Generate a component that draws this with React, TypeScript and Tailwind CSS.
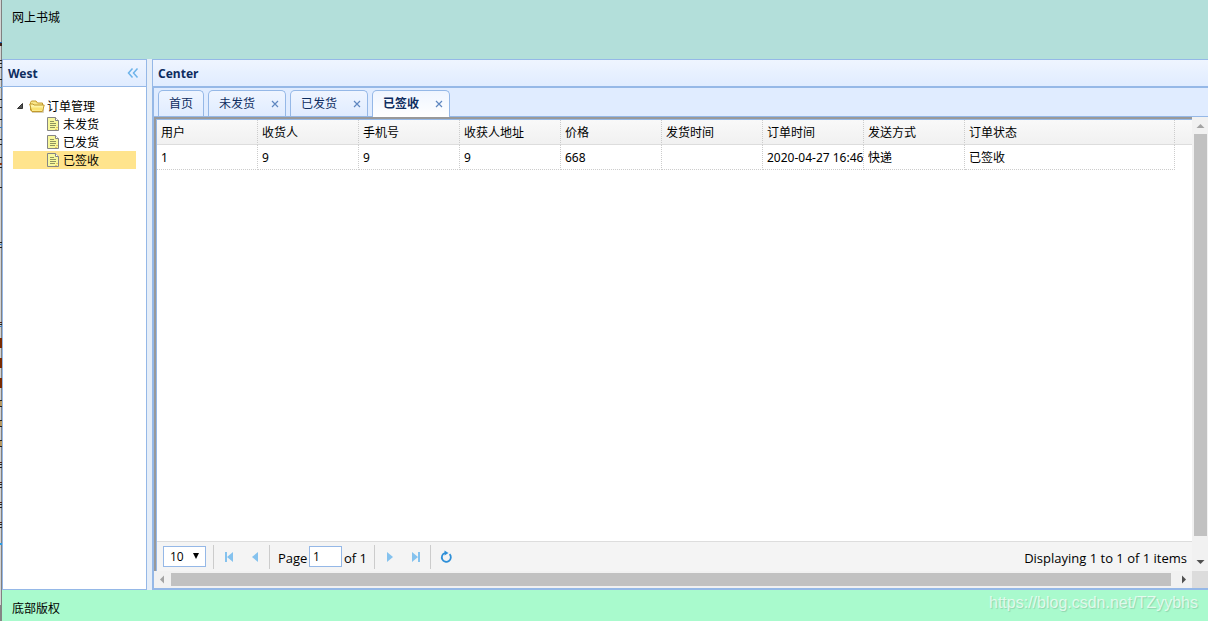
import React, { useState } from 'react';

const columns = ['用户', '收货人', '手机号', '收获人地址', '价格', '发货时间', '订单时间', '发送方式', '订单状态'];
const rows = [['1', '9', '9', '9', '668', '', '2020-04-27 16:46', '快递', '已签收']];
const orderPages = ['未发货', '已发货', '已签收'];

// what shows of the window behind, along the left edge
const edgeMarks = [
  { top: 42, height: 1, color: '#2468b0' },
  { top: 43, height: 3, color: '#3c2018' },
  { top: 60, height: 1, color: '#222' },
  { top: 63, height: 1, color: '#222' },
  { top: 67, height: 1, color: '#222' },
  { top: 79, height: 1, color: '#222' },
  { top: 87, height: 1, color: '#5b9bd5' },
  { top: 99, height: 1, color: '#222' },
  { top: 107, height: 1, color: '#222' },
  { top: 119, height: 1, color: '#222' },
  { top: 127, height: 1, color: '#3c78b4' },
  { top: 139, height: 1, color: '#222' },
  { top: 144, height: 1, color: '#222' },
  { top: 157, height: 1, color: '#222' },
  { top: 163, height: 2, color: '#8a3a18' },
  { top: 167, height: 1, color: '#222' },
  { top: 187, height: 1, color: '#222' },
  { top: 242, height: 1, color: '#222' },
  { top: 244, height: 1, color: '#3c78b4' },
  { top: 247, height: 1, color: '#222' },
  { top: 322, height: 1, color: '#4a2418' },
  { top: 324, height: 1, color: '#222' },
  { top: 326, height: 1, color: '#3c78b4' },
  { top: 338, height: 10, color: '#7a2a00' },
  { top: 358, height: 10, color: '#7a2a00' },
  { top: 378, height: 10, color: '#7a2a00' },
  { top: 400, height: 1, color: '#222' },
  { top: 401, height: 5, color: '#b89860' },
  { top: 406, height: 1, color: '#222' },
  { top: 420, height: 1, color: '#222' },
  { top: 421, height: 5, color: '#b89860' },
  { top: 426, height: 1, color: '#222' },
  { top: 440, height: 1, color: '#222' },
  { top: 441, height: 5, color: '#b89860' },
  { top: 446, height: 1, color: '#222' },
  { top: 462, height: 1, color: '#4a2418' },
  { top: 464, height: 1, color: '#222' },
  { top: 467, height: 1, color: '#222' },
  { top: 482, height: 1, color: '#4a2418' },
  { top: 484, height: 1, color: '#222' },
  { top: 487, height: 1, color: '#222' },
  { top: 502, height: 1, color: '#4a2418' },
  { top: 504, height: 1, color: '#222' },
  { top: 507, height: 1, color: '#222' },
  { top: 522, height: 1, color: '#4a2418' },
  { top: 524, height: 1, color: '#222' },
  { top: 527, height: 1, color: '#222' },
  { top: 543, height: 2, color: '#2c9be0' },
  { top: 605, height: 16, color: '#858585' },
];

const FolderIcon = () => (
  <svg width="16" height="18" viewBox="0 0 16 18" className="shrink-0">
    <path d="M1.5 13.5v-8l1-1.500h4.500l1.500 2h5v3" fill="#f8e58a" stroke="#c39a2c" />
    <path d="M3 15.500h11.500v-6" fill="none" stroke="#d8d0b8" />
    <path d="M2.8 14.500h10.700l1.700-6.500H5L4 7H.7z" fill="#fdf3a4" stroke="#c39a2c" />
    <path d="M3.300 13.500h9.500l.8-3H2.500z" fill="#fae271" />
  </svg>
);

const FileIcon = () => (
  <svg width="16" height="18" viewBox="0 0 16 18" className="shrink-0">
    <path d="M.5 2.500h8l3 3v10H.5z" fill="#f8f89c" stroke="#858585" />
    <path d="M8.500 2.500v3h3" fill="#fff" stroke="#858585" />
    <path d="M3 6.500h4M3 8.500h6M3 10.500h6M3 12.500h5" stroke="#8f9460" />
    <path d="M9 12.500h2M8 14.500h2" stroke="#e8c860" />
  </svg>
);

const Separator = () => <div className="h-6 w-px bg-[#ccc]" />;

interface PagerButtonProps {
  label: string;
  children: React.ReactNode;
}

const PagerButton: React.FC<PagerButtonProps> = ({ label, children }) => (
  <button title={label} aria-label={label} className="flex h-6 w-[26px] items-center justify-center">
    <svg width="16" height="16" viewBox="0 0 16 16" fill="#85c2ee">
      {children}
    </svg>
  </button>
);

const West = () => (
  <aside className="flex w-[145px] shrink-0 flex-col border border-[#95b8e7] bg-white">
    <div className="flex h-[27px] shrink-0 items-center justify-between border-b border-[#95b8e7] bg-linear-to-b from-[#eff5ff] to-[#e0ecff] pr-[6px] pl-[5px]">
      <h2 className="pt-[2px] font-bold text-[#0e2d5f]">West</h2>
      <button title="Collapse" aria-label="Collapse">
        <svg width="14" height="14" viewBox="0 0 14 14" fill="none" stroke="#6cb3ea" strokeWidth="1.5">
          <path d="M6.5 2.500l-4 4.500l4 4.500M11.500 2.500l-4 4.500l4 4.500" />
        </svg>
      </button>
    </div>
    <ul className="p-[10px]">
      <li>
        <div className="flex h-[18px] items-center">
          <svg width="16" height="18" viewBox="0 0 16 18">
            <path d="M9.500 6.500v5h-5z" fill="#555" stroke="#333" />
          </svg>
          <FolderIcon />
          <span className="pt-[2px] pl-[2px]">订单管理</span>
        </div>
        <ul>
          {orderPages.map(page => (
            <li key={page} className={`flex h-[18px] items-center pl-[34px] ${page === '已签收' ? 'bg-[#ffe48d]' : ''}`}>
              <FileIcon />
              <a href="#" className="pt-[2px]">{page}</a>
            </li>
          ))}
        </ul>
      </li>
    </ul>
  </aside>
);

const Tabs = () => (
  <div className="flex h-[29px] shrink-0 items-end gap-1 border-b border-[#95b8e7] bg-[#e0ecff] pl-1 text-[#0e2d5f]">
    <button className="h-[26px] rounded-t-[5px] border border-b-0 border-[#95b8e7] bg-linear-to-b from-[#eff5ff] to-[#e0ecff] px-[10px]">
      首页
    </button>
    {orderPages.map(page => (
      <div
        key={page}
        className={`flex w-[78px] items-center justify-between rounded-t-[5px] border border-b-0 border-[#95b8e7] bg-linear-to-b from-[#eff5ff] pr-[5px] pl-[10px] ${
          page === '已签收' ? '-mb-px h-[27px] to-white font-bold' : 'h-[26px] to-[#e0ecff]'
        }`}
      >
        <button>{page}</button>
        <button aria-label={`关闭${page}`}>
          <svg width="10" height="10" viewBox="0 0 10 10" stroke="#5f87c0" strokeWidth="1.2">
            <path d="M2 2l6 6M8 2l-6 6" />
          </svg>
        </button>
      </div>
    ))}
  </div>
);

const OrderGrid = () => (
  <div className="flex-1 overflow-hidden bg-white">
    <div className="bg-linear-to-b from-[#f9f9f9] to-[#e8e8e8]">
      <table className="w-full table-fixed border-separate border-spacing-0">
        <colgroup>
          {columns.map((c, i) => <col key={c} className={i === 8 ? 'w-[210px]' : 'w-[101px]'} />)}
          <col />
        </colgroup>
        <thead>
          <tr className="h-[25px]">
            {columns.map(c => (
              <th key={c} className="border-r border-b border-r-[#ccc] border-b-[#ddd] px-1 pt-[2px] pb-0 text-left font-normal [border-right-style:dotted]">{c}</th>
            ))}
            <td className="border-b border-[#ddd] p-0" />
          </tr>
        </thead>
        <tbody className="bg-white">
          {rows.map((row, r) => (
            <tr key={r} className="h-[25px]">
              {row.map((cell, i) => (
                <td key={i} className="overflow-hidden border-r border-b border-dotted border-[#ccc] pt-[2px] pr-0 pb-0 pl-1 whitespace-nowrap">{cell}</td>
              ))}
              <td className="p-0" />
            </tr>
          ))}
        </tbody>
      </table>
    </div>
  </div>
);

const Pager = () => {
  const [pageNo, setPageNo] = useState('1');

  return (
    <div className="flex h-[30px] shrink-0 items-center border-t border-[#ddd] bg-[#f4f4f4] pr-[5px] pl-[6px] font-['Open_Sans',sans-serif] text-[13px]">
      <div className="relative mr-[7px] h-[21px] w-[43px]">
        <select aria-label="每页条数" className="h-full w-full appearance-none border border-[#95b8e7] bg-white pl-[6px] text-[12px]">
          <option>10</option>
          <option>20</option>
          <option>50</option>
        </select>
        <svg width="8" height="6" viewBox="0 0 8 6" className="pointer-events-none absolute top-[7px] right-[6px]">
          <path d="M1 0h6L4 6z" />
        </svg>
      </div>
      <Separator />
      <div className="flex w-[55px] pl-[2px]">
        <PagerButton label="First"><path d="M4 3h2v10H4zM12 3v10L6 8z" /></PagerButton>
        <PagerButton label="Prev"><path d="M11 3v10L5 8z" /></PagerButton>
      </div>
      <Separator />
      <label className="flex h-full w-[104px] items-center pl-2">
        <span className="w-[31px] pt-[2px]">Page</span>
        <input
          value={pageNo}
          onChange={e => setPageNo(e.target.value)}
          className="h-[21px] w-[33px] border border-[#95b8e7] bg-white px-[3px] text-[12px]"
        />
        <span className="pt-[2px] pl-[2px]">of 1</span>
      </label>
      <Separator />
      <div className="flex w-[55px] pl-[2px]">
        <PagerButton label="Next"><path d="M5 3v10l6-5z" /></PagerButton>
        <PagerButton label="Last"><path d="M10 3h2v10h-2zM4 3v10l6-5z" /></PagerButton>
      </div>
      <Separator />
      <div className="pl-[2px]">
        <PagerButton label="Refresh">
          <path d="M11.600 5.200A4.500 4.500 0 1 1 7 4" fill="none" stroke="#2d8fd8" strokeWidth="1.8" />
          <path d="M6.500 1.500v5l4-2.500z" fill="#2d8fd8" />
        </PagerButton>
      </div>
      <div className="ml-auto pt-[2px]">Displaying 1 to 1 of 1 items</div>
    </div>
  );
};

const Center = () => (
  <main className="flex min-w-0 flex-1 flex-col border-t border-l border-[#95b8e7]">
    <h2 className="flex h-[27px] shrink-0 items-center border-b border-[#95b8e7] bg-linear-to-b from-[#eff5ff] to-[#e0ecff] pt-[2px] pl-[5px] font-bold text-[#0e2d5f]">
      Center
    </h2>
    <div className="flex min-h-0 flex-1 flex-col border-t border-b-2 border-l border-[#95b8e7]">
      <Tabs />
      <div className="flex min-h-0 flex-1">
        <div className="flex min-w-0 flex-1 flex-col border-t-2 border-l-2 border-[#999]">
          <div className="flex min-h-0 flex-1 flex-col border-t border-l border-[#95b8e7]">
            <OrderGrid />
            <Pager />
          </div>
        </div>
        {/* vertical scroll bar */}
        <div className="flex w-4 shrink-0 flex-col items-center bg-[#f1f1f1]">
          <svg width="16" height="17" viewBox="0 0 16 17" className="shrink-0"><path d="M4.500 11h8l-4-4z" fill="#a3a3a3" /></svg>
          <div className="ml-px w-[13px] flex-1 bg-[#c1c1c1]" />
          <svg width="16" height="35" viewBox="0 0 16 35" className="shrink-0"><path d="M4.500 24h8l-4 4z" fill="#505050" /></svg>
        </div>
      </div>
      {/* horizontal scroll bar */}
      <div className="flex h-[17px] shrink-0 items-center bg-[#f1f1f1]">
        <svg width="17" height="17" viewBox="0 0 17 17" className="shrink-0"><path d="M10 4.500v8l-4-4z" fill="#a3a3a3" /></svg>
        <div className="h-[13px] flex-1 bg-[#c1c1c1]" />
        <svg width="21" height="17" viewBox="0 0 21 17" className="shrink-0"><path d="M11 4.500v8l4-4z" fill="#505050" /></svg>
        <div className="h-full w-4 bg-[#dcdcdc]" />
      </div>
    </div>
  </main>
);

export default function App() {
  return (
    <div className="flex h-screen font-['Noto_Sans','Noto_Sans_CJK_SC',sans-serif] text-[12px] leading-[16px] text-black">
      <div className="relative w-[2px] shrink-0 bg-linear-to-r from-[#d4d4d4] from-50% to-[#808080] to-50%">
        {edgeMarks.map(mark => (
          <div
            key={mark.top}
            className="absolute left-0 w-[2px]"
            style={{ top: mark.top, height: mark.height, background: mark.color }}
          />
        ))}
      </div>
      <div className="flex min-w-0 flex-1 flex-col bg-[#e6eef8]">
        <header className="h-[59px] shrink-0 bg-[#b3dfda] px-[10px] pt-[10px]">网上书城</header>
        <div className="flex min-h-0 flex-1 gap-[5px]">
          <West />
          <Center />
        </div>
        <footer className="flex h-[31px] shrink-0 items-start justify-between bg-[#a9facd] px-[10px]">
          <span className="pt-[11px]">底部版权</span>
          <span className="pt-[5px] font-['Liberation_Sans',sans-serif] text-[16px] text-white/70 [text-shadow:1px_1px_1px_rgba(0,0,0,0.15)]">
            https://blog.csdn.net/TZyybhs
          </span>
        </footer>
      </div>
    </div>
  );
}
